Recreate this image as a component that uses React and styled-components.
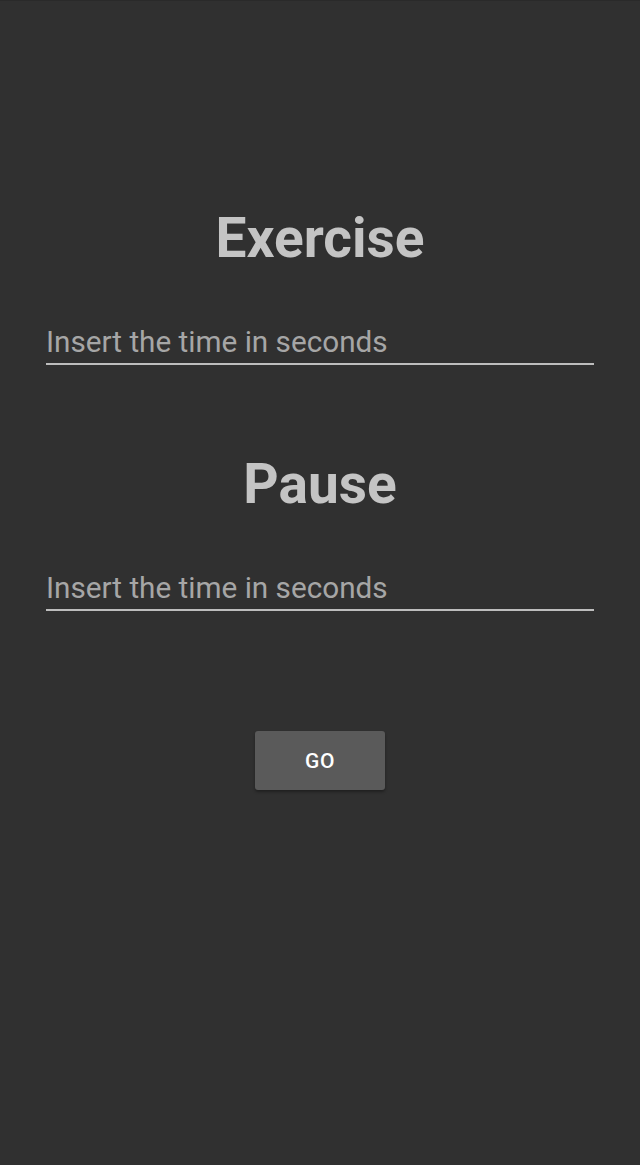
import React, { useState } from "react";
import styled, { createGlobalStyle } from "styled-components";

const GlobalStyle = createGlobalStyle`
  html, body {
    margin: 0;
    padding: 0;
    background-color: #303030;
  }
  body {
    font-family: Roboto, "Noto Sans", sans-serif;
  }
`;

const Screen = styled.div`
  min-height: 1165px;
  box-sizing: border-box;
  background-color: #303030;
  border-top: 1px solid #2a2a2a;
  padding: 200px 46px 0;
  display: flex;
  flex-direction: column;
  align-items: stretch;
`;

const Section = styled.div`
  display: flex;
  flex-direction: column;
  margin-bottom: ${(p) => p.$gap || 0}px;
`;

const Title = styled.h1`
  margin: 0 0 48px;
  text-align: center;
  font-size: 55px;
  line-height: 74px;
  font-weight: 700;
  color: #c4c4c4;
`;

const Input = styled.input`
  display: block;
  width: 100%;
  box-sizing: border-box;
  background: transparent;
  border: none;
  border-bottom: 2px solid #bdbdbd;
  padding: 0 0 2px;
  font-family: Roboto, "Noto Sans", sans-serif;
  font-size: 29.7px;
  line-height: 38px;
  color: #e0e0e0;
  outline: none;
  &::placeholder {
    color: #a6a6a6;
  }
`;

const ButtonRow = styled.div`
  display: flex;
  justify-content: center;
  margin-top: 120px;
`;

const Button = styled.button`
  width: 130px;
  height: 59px;
  border: none;
  border-radius: 3px;
  background-color: #5a5a5a;
  color: #ffffff;
  font-family: Roboto, "Noto Sans", sans-serif;
  font-size: 21px;
  font-weight: 500;
  letter-spacing: 0.5px;
  box-shadow: 0 2px 3px rgba(0, 0, 0, 0.35);
  cursor: pointer;
`;

export default function App() {
  const [exercise, setExercise] = useState("");
  const [pause, setPause] = useState("");

  return (
    <>
      <GlobalStyle />
      <Screen>
        <Section $gap={82}>
          <Title>Exercise</Title>
          <Input
            type="number"
            value={exercise}
            placeholder="Insert the time in seconds"
            onChange={(e) => setExercise(e.target.value)}
          />
        </Section>
        <Section>
          <Title>Pause</Title>
          <Input
            type="number"
            value={pause}
            placeholder="Insert the time in seconds"
            onChange={(e) => setPause(e.target.value)}
          />
        </Section>
        <ButtonRow>
          <Button type="button">GO</Button>
        </ButtonRow>
      </Screen>
    </>
  );
}
